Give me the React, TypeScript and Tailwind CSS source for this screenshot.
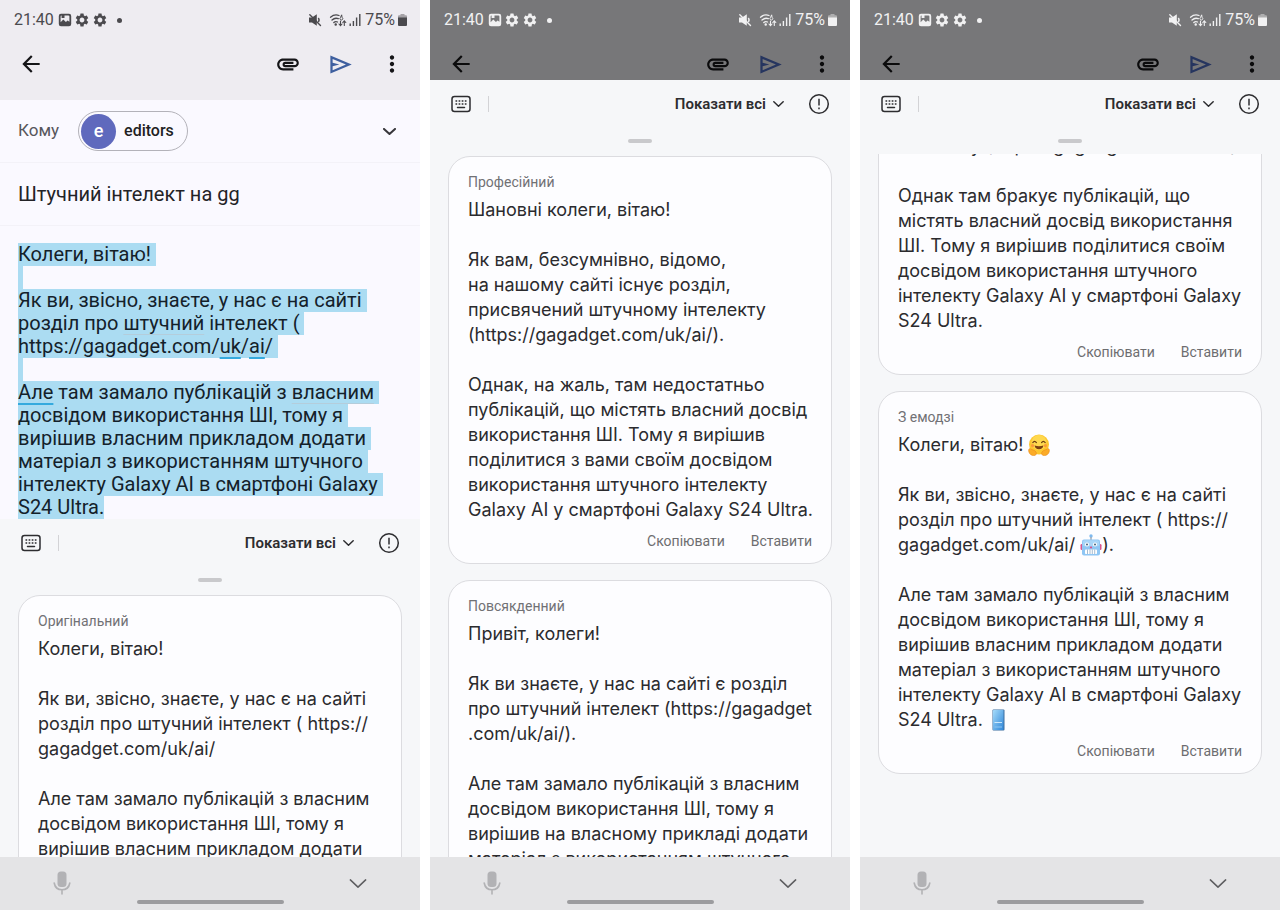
import type { ReactNode } from "react";
import { MdArrowBack, MdAttachment, MdMoreVert, MdSettings } from "react-icons/md";

const ORIGINAL = `Колеги, вітаю!

Як ви, звісно, знаєте, у нас є на сайті
розділ про штучний інтелект ( https://
gagadget.com/uk/ai/

Але там замало публікацій з власним
досвідом використання ШІ, тому я
вирішив власним прикладом додати
матеріал з використанням штучного
інтелекту Galaxy AI в смартфоні Galaxy
S24 Ultra.`;

const PROFESSIONAL = `Шановні колеги, вітаю!

Як вам, безсумнівно, відомо,
на нашому сайті існує розділ,
присвячений штучному інтелекту
(https://gagadget.com/uk/ai/).

Однак, на жаль, там недостатньо
публікацій, що містять власний досвід
використання ШІ. Тому я вирішив
поділитися з вами своїм досвідом
використання штучного інтелекту
Galaxy AI у смартфоні Galaxy S24 Ultra.`;

const CASUAL = `Привіт, колеги!

Як ви знаєте, у нас на сайті є розділ
про штучний інтелект (https://gagadget
.com/uk/ai/).

Але там замало публікацій з власним
досвідом використання ШІ, тому я
вирішив на власному прикладі додати
матеріал з використанням штучного
інтелекту Galaxy AI у смартфоні Galaxy
S24 Ultra.`;

const POLITE = `інтелекту (https://gagadget.com/uk/ai/).

Однак там бракує публікацій, що
містять власний досвід використання
ШІ. Тому я вирішив поділитися своїм
досвідом використання штучного
інтелекту Galaxy AI у смартфоні Galaxy
S24 Ultra.`;

function HugEmoji() {
  return (
    <svg role="img" aria-label="🤗" viewBox="0 0 22 22" className="inline-block size-[22px] align-[-5px]">
      <circle cx="11" cy="10.5" r="10" fill="#fdc62f" />
      <circle cx="11" cy="8.5" r="7.5" fill="#fed84e" />
      <path d="M4.8 8.6q1.7-2.6 3.6 0M13.6 8.6q1.7-2.6 3.6 0" fill="none" stroke="#6b3d10" strokeWidth="1.2" strokeLinecap="round" />
      <path d="M6.6 11.4q4.4 1.6 8.8 0-.6 3.8-4.4 3.8t-4.4-3.8z" fill="#7b3f12" />
      <circle cx="4.6" cy="11.6" r="1.6" fill="#fb9a3a" />
      <circle cx="17.4" cy="11.6" r="1.6" fill="#fb9a3a" />
      <path d="M.6 16.2c0-1.6 1.6-2 2.4-1l2.4.9c2.2.9 3.6 2.4 2.8 4.2-.5 1.2-2 1.5-3.6 1.2C2 21 .6 18.500.6 16.200zM21.400 16.200c0-1.600-1.600-2-2.400-1l-2.400.9c-2.200.9-3.600 2.400-2.800 4.200.5 1.200 2 1.500 3.600 1.200 2.600-.5 4-3 4-5.300z" fill="#fbab27" stroke="#e98a1c" strokeWidth=".6" />
    </svg>
  );
}

function RobotEmoji() {
  return (
    <svg role="img" aria-label="🤖" viewBox="0 0 22 22" className="inline-block size-[22px] align-[-5px]">
      <circle cx="11" cy="2" r="1.700" fill="#7fb9ee" />
      <path d="M11 3v3" stroke="#9aa7b5" strokeWidth="1.400" />
      <rect x=".5" y="10" width="3" height="6" rx="1.300" fill="#d9568c" />
      <rect x="18.500" y="10" width="3" height="6" rx="1.300" fill="#d9568c" />
      <rect x="2" y="5.500" width="18" height="16" rx="2" fill="#8fc6f4" />
      <rect x="3" y="6.300" width="16" height="6" rx="1.500" fill="#a9d6f8" />
      <circle cx="7" cy="10.500" r="2" fill="#fff" />
      <circle cx="15" cy="10.500" r="2" fill="#fff" />
      <circle cx="7" cy="10.500" r="1" fill="#46617d" />
      <circle cx="15" cy="10.500" r="1" fill="#46617d" />
      <path d="M11 11.800l1.300 2.400H9.700z" fill="#e0447a" />
      <rect x="5" y="15.500" width="12" height="4.500" rx=".8" fill="#fff" />
      <path d="M7.500 15.500V20M10 15.500V20M12.300 15.500V20M14.700 15.500V20" stroke="#7f9fbd" strokeWidth=".7" />
    </svg>
  );
}

function PhoneEmoji() {
  return (
    <svg role="img" aria-label="📱" viewBox="0 0 22 22" className="inline-block size-[22px] align-[-5px]">
      <defs>
        <linearGradient id="screen" x1="0" y1="0" x2="1" y2="1">
          <stop offset="0" stopColor="#a5dbfa" />
          <stop offset="1" stopColor="#2f86d8" />
        </linearGradient>
      </defs>
      <rect x="4.500" y=".5" width="12" height="21" rx="1" fill="#3d6f9f" />
      <rect x="5" y="1" width="10.500" height="20" rx=".5" fill="url(#screen)" />
      <path d="M6.500 13.500h7.500" stroke="#d9effd" strokeWidth=".9" />
      <path d="M6.500 18h7.500" stroke="#8cc5f2" strokeWidth="1" />
    </svg>
  );
}

function StatusBar({ dim }: { dim?: boolean }) {
  return (
    <div className={`flex h-10 items-center pr-[13px] pl-[14px] text-base ${dim ? "text-[#f1f1f2]" : "text-[#4b4a4e]"}`}>
      <span>21:40</span>
      <span className="ml-1 flex items-center gap-[2px]">
        <svg viewBox="0 0 14 14" className="size-[14px]" fill="currentColor" fillRule="evenodd">
          <path d="M3 .8h8A2.200 2.200 0 0 1 13.200 3v8a2.200 2.200 0 0 1-2.200 2.200H3A2.200 2.200 0 0 1 .8 11V3A2.200 2.200 0 0 1 3 .8zM2.600 9.300l2.700-2.700 2.600 2.300 1.700-1.500 1.800 1.400V3.600a1 1 0 0 0-1-1H6.500V5H3.600V2.600a1 1 0 0 0-1 1z" />
        </svg>
        <MdSettings size={16} />
        <MdSettings size={16} />
      </span>
      <span className="ml-[9px] size-[5px] rounded-full bg-current" />
      <span className="ml-auto flex items-center gap-1">
        <svg viewBox="0 0 14 14" className="size-[14px]" fill="currentColor">
          <path d="M1 4.600h3L8.800 1.200v11.600L4 9.400H1z" />
          <path d="M10.300 5q1.600 2 0 4" fill="none" stroke="currentColor" strokeWidth="1.400" />
          <path d="M1.800 1.800l10.700 10.700" stroke="currentColor" strokeWidth="1.400" strokeLinecap="round" />
        </svg>
        <svg viewBox="0 0 18 16" className="ml-[3px] h-4 w-[18px]" fill="none" stroke="currentColor" strokeWidth="1.300" strokeLinecap="round">
          <path d="M1.500 5.200Q5.500 1.800 10 3.500M3 8Q6 5.300 9.300 6.700M4.800 10.500q1.700-1.500 3.700-.5" />
          <circle cx="6.700" cy="12.500" r=".6" fill="currentColor" />
          <path d="M12.500 3.200l-1 2.300a1.400 1.400 0 1 0 1.800 0z" strokeWidth="1" />
          <path d="M11.500 9v4.500M10 12l1.500 1.700L13 12M15.300 13.500V9M13.800 10.500L15.300 8.800l1.500 1.700" strokeWidth="1.100" />
        </svg>
        <svg viewBox="0 0 12 12" className="-ml-[2px] size-3" stroke="currentColor" strokeWidth="1.400">
          <path d="M1.200 12V9.500M4.400 12V7M7.600 12V3.500M10.800 12V0" />
        </svg>
        <span>75%</span>
        <svg viewBox="0 0 9 12" className="-ml-px h-3 w-[9px]" fill="currentColor">
          <path d="M2.500 0h4v1.200H8a1 1 0 0 1 1 1V4H0V2.200a1 1 0 0 1 1-1h1.500z" opacity=".45" />
          <path d="M0 3.600h9V11a1 1 0 0 1-1 1H1a1 1 0 0 1-1-1z" />
        </svg>
      </span>
    </div>
  );
}

function AppHeader({ dim }: { dim?: boolean }) {
  const button = "flex h-12 w-[52px] items-center justify-center";
  return (
    <header className={`shrink-0 overflow-hidden ${dim ? "h-20 bg-[#777779] text-[#0b0b0c]" : "h-[100px] bg-[#eeecf1] text-[#151518]"}`}>
      <StatusBar dim={dim} />
      <div className="flex pr-[2px] pl-[5px]">
        <button aria-label="Назад" className={button}><MdArrowBack size={26} /></button>
        <button aria-label="Прикріпити" className={`ml-auto ${button}`}><MdAttachment size={26} /></button>
        <button aria-label="Надіслати" className={`${button} ${dim ? "text-[#26355f]" : "text-[#3e5f9f]"}`}>
          <svg viewBox="0 0 24 24" className="size-[27px]" fill="currentColor">
            <path d="M3 20V4l19 8-19 8zm2-3l11.850-5L5 7v3.500l6 1.500-6 1.500V17z" />
          </svg>
        </button>
        <button aria-label="Більше" className={button}><MdMoreVert size={26} /></button>
      </div>
    </header>
  );
}

function Chevron({ className }: { className: string }) {
  return (
    <svg viewBox="0 0 20 10" className={className} fill="none" stroke="currentColor" strokeLinecap="round" strokeLinejoin="round">
      <path d="M1.500 1l8.500 8 8.500-8" vectorEffect="non-scaling-stroke" />
    </svg>
  );
}

function SheetHeader() {
  return (
    <div className="h-[74px] shrink-0">
      <div className="flex h-12 items-center pr-[21px] pl-[21px] text-[#2d2d30]">
        <button aria-label="Клавіатура">
          <svg viewBox="0 0 20 18" className="h-[18px] w-5" fill="none" stroke="currentColor" strokeWidth="1.500">
            <rect x="1" y="1.500" width="18" height="15" rx="2.500" />
            <path d="M4.500 6h11M4.500 9h11" strokeWidth="1.500" strokeDasharray="1.700 1.400" />
            <path d="M6.500 12.500h7" strokeLinecap="round" />
          </svg>
        </button>
        <span className="ml-[17px] h-4 w-px bg-[#d3d3d6]" />
        <button className="ml-auto flex items-center gap-[7px] text-[15px] font-semibold">
          Показати всі
          <Chevron className="h-[6px] w-[11px] stroke-[1.5]" />
        </button>
        <button aria-label="Інформація" className="ml-[25px]">
          <svg viewBox="0 0 20 20" className="size-5 overflow-visible" fill="none" stroke="currentColor" strokeWidth="1.500">
            <circle cx="10" cy="10" r="9.300" />
            <path d="M10 4.800v6.700M10 13.500v1.700" />
          </svg>
        </button>
      </div>
      <div className="mx-auto mt-[11px] h-1 w-6 rounded-full bg-[#c9c9cc]" />
    </div>
  );
}

function VariantCard({ title, children }: { title?: string; children: ReactNode }) {
  return (
    <article className="shrink-0 rounded-[22px] border border-[#dcdce0] bg-[#fdfdff] px-[19px] pt-[15px] pb-3">
      {title && <h2 className="mb-[5px] text-sm leading-5 text-[#717175]">{title}</h2>}
      <p className="font-[Inter,sans-serif] text-lg leading-[25px] whitespace-pre text-[#2b2b2e]">{children}</p>
      <div className="flex justify-end gap-[26px] pt-[9px] text-sm leading-5 text-[#6d6d70]">
        <button>Скопіювати</button>
        <button>Вставити</button>
      </div>
    </article>
  );
}

function BottomBar() {
  return (
    <footer className="flex h-[53px] shrink-0 flex-col justify-between bg-[#e4e4e6] pb-[6px]">
      <div className="flex items-center justify-between pt-[14px] pr-[53px] pl-[53px]">
        <button aria-label="Голосове введення" className="text-[#b2b2b5]">
          <svg viewBox="0 0 18 24" className="h-6 w-[18px]" fill="none" stroke="currentColor" strokeWidth="1.600" strokeLinecap="round">
            <rect x="4.500" y="0.500" width="9" height="15.500" rx="3.500" fill="currentColor" stroke="none" />
            <path d="M1.200 12c.8 4.500 3.800 6.800 7.800 6.800s7-2.300 7.800-6.800M9 19v4" />
          </svg>
        </button>
        <button aria-label="Згорнути" className="text-[#5d5d60]">
          <Chevron className="h-[9px] w-[18px] stroke-[1.5]" />
        </button>
      </div>
      <div className="mx-auto h-1 w-[35%] shrink-0 rounded-full bg-[#9c9c9f]" />
    </footer>
  );
}

function Sheet({ scrolled, children }: { scrolled?: boolean; children: ReactNode }) {
  return (
    <section className="flex min-h-0 flex-1 flex-col bg-[#f6f7f9]">
      <SheetHeader />
      <div className={`flex min-h-0 flex-1 flex-col gap-4 overflow-hidden px-[18px] ${scrolled ? "justify-end pb-[83px]" : "pt-[2px]"}`}>
        {children}
      </div>
      <BottomBar />
    </section>
  );
}

function Line({ last, children }: { last?: boolean; children?: ReactNode }) {
  return <span className={`block h-[23px] w-fit bg-[#abdcf2] ${last ? "" : "pr-[5px]"}`}>{children}</span>;
}

function Marked({ faint, children }: { faint?: boolean; children: ReactNode }) {
  return (
    <span className={`underline underline-offset-4 ${faint ? "decoration-[#b4cddb] decoration-1" : "decoration-[#35aade] decoration-2"}`}>
      {children}
    </span>
  );
}

function Compose() {
  return (
    <div className="shrink-0 bg-[#faf9ff]">
      <div className="flex h-[63px] items-center border-b border-[#f3f2f8] pr-6 pl-[18px]">
        <span className="text-[17px] text-[#57565b]">Кому</span>
        <button className="ml-[19px] flex h-10 items-center gap-2 rounded-full border border-[#b3b2b9] pr-[13px] pl-[2px] text-base font-medium text-[#1f1f23]">
          <span className="flex size-[35px] items-center justify-center rounded-full bg-[#5f69bd] text-lg text-white">e</span>
          editors
        </button>
        <button aria-label="Показати копію" className="ml-auto text-[#37373b]">
          <Chevron className="h-[7px] w-[13px] stroke-2" />
        </button>
      </div>
      <div className="flex h-[63px] items-center border-b border-[#f3f2f8] px-[18px]">
        <input aria-label="Тема" defaultValue="Штучний інтелект на gg" className="w-full bg-transparent text-xl text-[#232327] outline-none" />
      </div>
      <div role="textbox" aria-label="Текст листа" className="px-[18px] pt-[17px] text-xl leading-[23px] whitespace-pre text-[#14212a]">
        <Line>Колеги, вітаю!</Line>
        <Line />
        <Line>Як ви, звісно, знаєте, у нас є на сайті</Line>
        <Line>розділ про <Marked faint>штучний</Marked> інтелект (</Line>
        <Line>https://gagadget.com/<Marked>uk</Marked>/<Marked>ai</Marked>/</Line>
        <Line />
        <Line><Marked>Але</Marked> там замало публікацій з <Marked faint>власним</Marked></Line>
        <Line>досвідом використання ШІ, тому я</Line>
        <Line>вирішив власним прикладом додати</Line>
        <Line>матеріал з використанням штучного</Line>
        <Line>інтелекту Galaxy AI в смартфоні Galaxy</Line>
        <Line last>S24 Ultra.</Line>
      </div>
    </div>
  );
}

export default function App() {
  const phone = "flex min-w-0 flex-col overflow-hidden";
  return (
    <main className="grid h-screen grid-cols-3 grid-rows-[minmax(0,1fr)] gap-[10px] bg-white font-[Roboto,sans-serif]">
      <div className={phone}>
        <AppHeader />
        <Compose />
        <Sheet>
          <VariantCard title="Оригінальний">{ORIGINAL}</VariantCard>
        </Sheet>
      </div>
      <div className={phone}>
        <AppHeader dim />
        <Sheet>
          <VariantCard title="Професійний">{PROFESSIONAL}</VariantCard>
          <VariantCard title="Повсякденний">{CASUAL}</VariantCard>
        </Sheet>
      </div>
      <div className={phone}>
        <AppHeader dim />
        <Sheet scrolled>
          <VariantCard>{POLITE}</VariantCard>
          <VariantCard title="З емодзі">
            {"Колеги, вітаю! "}
            <HugEmoji />
            {"\n\nЯк ви, звісно, знаєте, у нас є на сайті\nрозділ про штучний інтелект ( https://\ngagadget.com/uk/ai/ "}
            <RobotEmoji />
            {").\n\nАле там замало публікацій з власним\nдосвідом використання ШІ, тому я\nвирішив власним прикладом додати\nматеріал з використанням штучного\nінтелекту Galaxy AI в смартфоні Galaxy\nS24 Ultra. "}
            <PhoneEmoji />
          </VariantCard>
        </Sheet>
      </div>
    </main>
  );
}
